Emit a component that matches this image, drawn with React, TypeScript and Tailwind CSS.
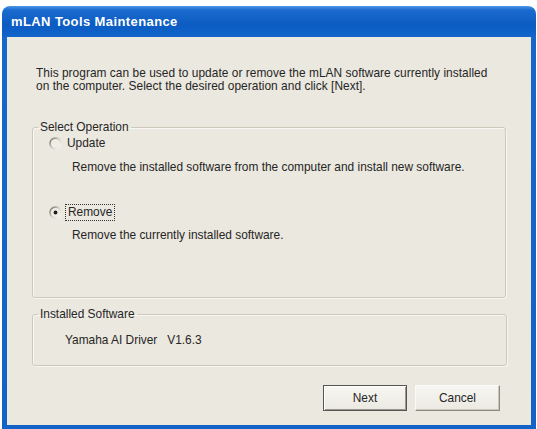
import React from "react";

function Radio({ checked }: { checked?: boolean }) {
  const id = checked ? "rg1" : "rg0";
  return (
    <svg width="13" height="13" viewBox="0 0 13 13" className="shrink-0">
      <defs>
        <linearGradient id={id} x1="0" y1="0.2" x2="0.9" y2="1">
          <stop offset="0" stopColor="#77746a" />
          <stop offset="0.45" stopColor="#cfccc2" />
          <stop offset="1" stopColor="#ffffff" />
        </linearGradient>
      </defs>
      <circle cx="6.5" cy="6.5" r="6.3" fill={`url(#${id})`} />
      <circle cx="6.5" cy="6.5" r="4.6" fill="#efede6" />
      {checked && <circle cx="6.5" cy="6.5" r="1.9" fill="#1e1e1e" />}
    </svg>
  );
}

export default function App() {
  const font = { fontFamily: '"Liberation Sans", Arial, sans-serif' };
  return (
    <div className="w-[537px] h-[429px] bg-white pt-[6px] pl-[2px] pr-[1px] overflow-hidden" style={font}>
      <div className="flex flex-col h-full rounded-t-[8px] bg-[linear-gradient(180deg,#4f97e6_0px,#1a6acf_4px,#0c5cc2_18px,#0f62c8_28px,#1766c9_31px,#1362c6_100%)]">
        <div className="h-[31px] flex items-center pl-[9px] pt-[1px]">
          <span className="text-white font-bold text-[13px] tracking-[0.4px]">mLAN Tools Maintenance</span>
        </div>
        <div className="flex-1 mx-[5px] mb-[4px] bg-[#ebe8df] flex flex-col px-[25px] text-[11.9px] text-[#262626] leading-[13px]">
          <p className="pt-[30px] pl-[4px] tracking-[0.04px]">
            This program can be used to update or remove the mLAN software currently installed
            <br />
            on the computer. Select the desired operation and click [Next].
          </p>
          <fieldset className="mt-[28px] w-[474px] h-[177px] border border-[#cdc9bb] rounded-[3px] px-[8px] shadow-[inset_1px_1px_0_#f7f6f2,1px_1px_0_#f7f6f2]">
            <legend className="px-[2px] ml-[-3px]">Select Operation</legend>
            <div className="flex items-center gap-[5px] pl-[8px] mt-[3px]">
              <Radio />
              <span>Update</span>
            </div>
            <div className="pl-[31px] mt-[11px]">
              Remove the installed software from the computer and install new software.
            </div>
            <div className="flex items-center gap-[5px] pl-[8px] mt-[32px]">
              <Radio checked />
              <span className="outline outline-1 outline-dotted outline-[#333] outline-offset-[1px] px-[1px]">Remove</span>
            </div>
            <div className="pl-[31px] mt-[10px]">Remove the currently installed software.</div>
          </fieldset>
          <fieldset className="mt-[10px] w-[475px] h-[58px] border border-[#cdc9bb] rounded-[3px] px-[8px] shadow-[inset_1px_1px_0_#f7f6f2,1px_1px_0_#f7f6f2]">
            <legend className="px-[2px] ml-[-3px]">Installed Software</legend>
            <div className="pl-[24px] mt-[13px]">Yamaha AI Driver&nbsp;&nbsp;&nbsp;V1.6.3</div>
          </fieldset>
          <div className="flex justify-end gap-[8px] mt-[19px] pr-[6px]">
            <button className="w-[84px] h-[26px] border border-[#555] bg-[linear-gradient(180deg,#f7f6f2,#ebe9e1)] shadow-[inset_1px_1px_0_#fff,inset_-1px_-1px_0_#9a978d] text-[#262626]">
              Next
            </button>
            <button className="w-[85px] h-[26px] border border-t-[#fbfaf6] border-l-[#fbfaf6] border-r-[#8d8a80] border-b-[#8d8a80] bg-[linear-gradient(180deg,#f7f6f2,#ebe9e1)] shadow-[inset_-1px_-1px_0_#c9c6bb] text-[#262626]">
              Cancel
            </button>
          </div>
        </div>
      </div>
    </div>
  );
}
